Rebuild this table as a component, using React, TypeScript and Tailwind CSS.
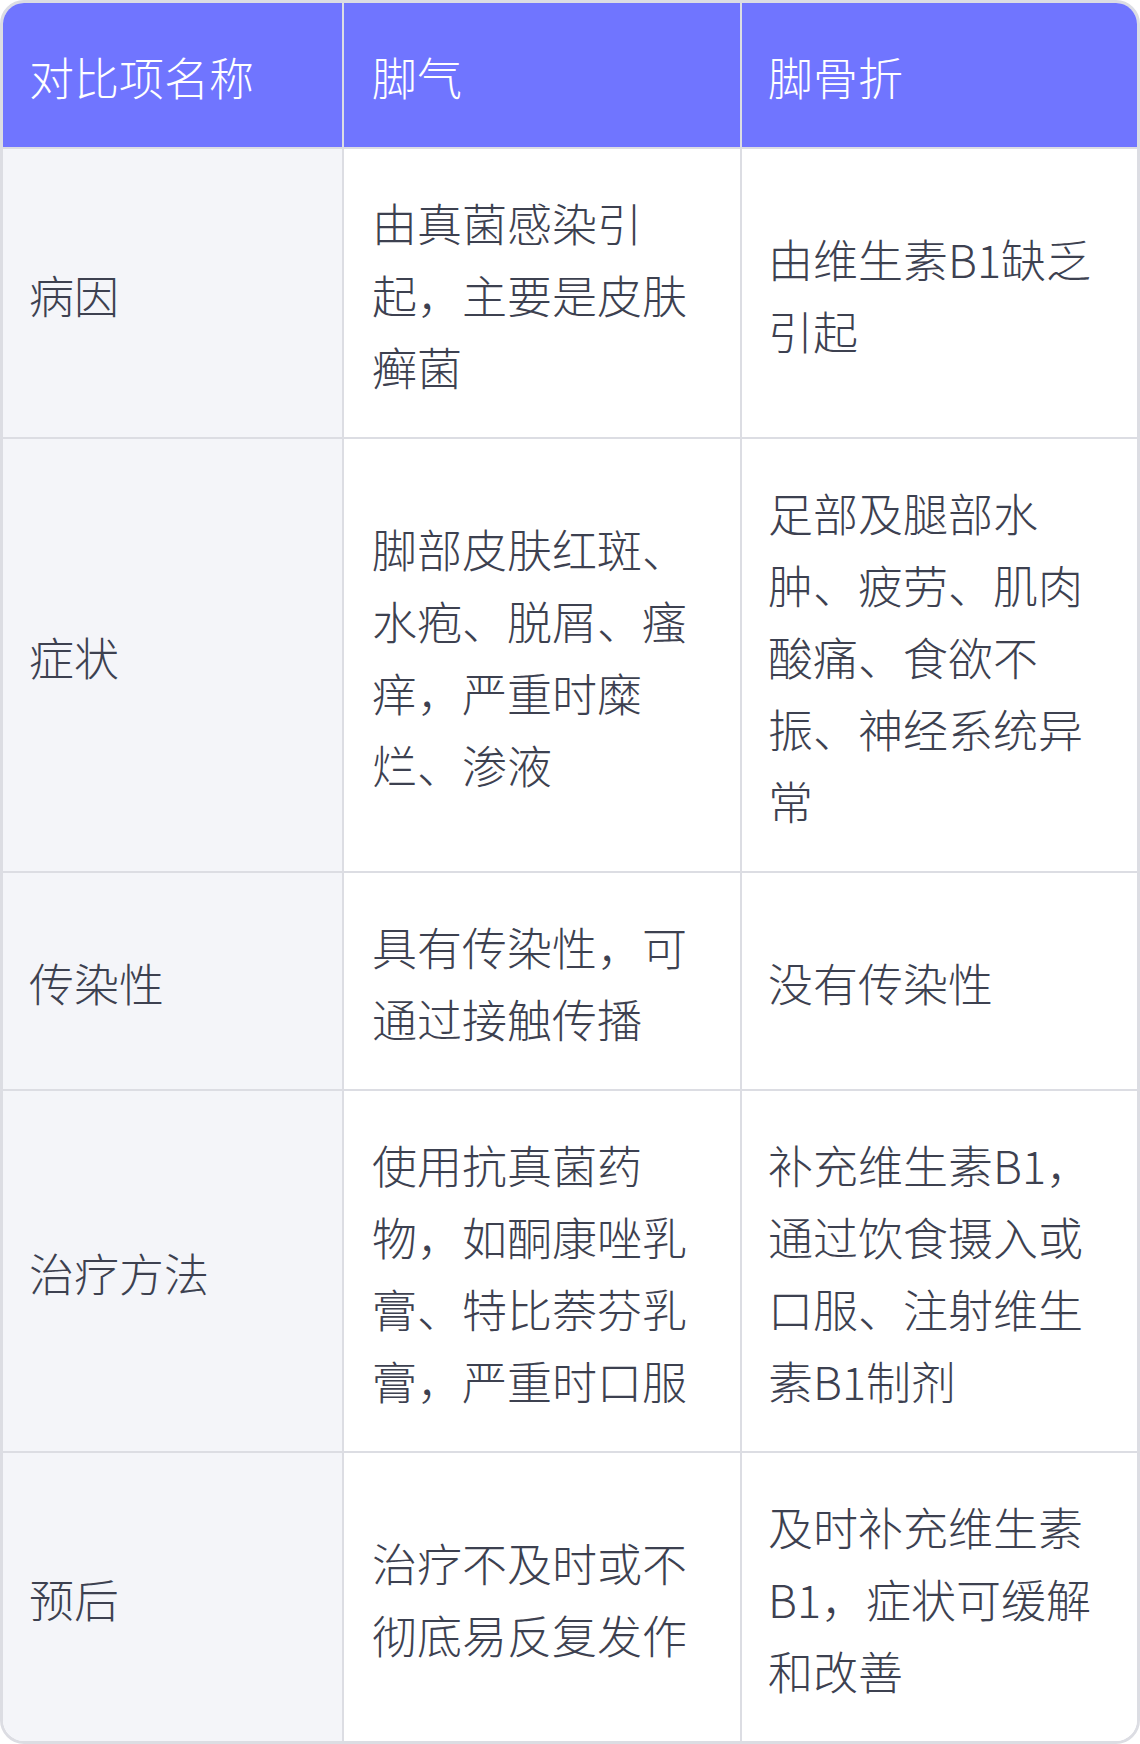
import React from "react";

const rows: [string, string, string][] = [
  ["病因", "由真菌感染引起，主要是皮肤癣菌", "由维生素B1缺乏引起"],
  ["症状", "脚部皮肤红斑、水疱、脱屑、瘙痒，严重时糜烂、渗液", "足部及腿部水肿、疲劳、肌肉酸痛、食欲不振、神经系统异常"],
  ["传染性", "具有传染性，可通过接触传播", "没有传染性"],
  ["治疗方法", "使用抗真菌药物，如酮康唑乳膏、特比萘芬乳膏，严重时口服", "补充维生素B1，通过饮食摄入或口服、注射维生素B1制剂"],
  ["预后", "治疗不及时或不彻底易反复发作", "及时补充维生素B1，症状可缓解和改善"],
];

export default function App() {
  return (
    <div
      className="w-[1140px] bg-white"
      style={{ fontFamily: '"Noto Sans CJK SC", "Noto Sans", sans-serif' }}
    >
      <div className="overflow-hidden rounded-[24px] border-[3px] border-[#dcdde3]">
        <div className="grid grid-cols-[341px_398px_1fr] text-[45px] leading-[72px] font-light">
          <div className="flex items-center border-r-2 border-b-2 border-[#dcdde3] bg-[#7075ff] pl-[26px] pr-[28px] pt-[38px] pb-[34px] text-white">
            对比项名称
          </div>
          <div className="flex items-center border-r-2 border-b-2 border-[#dcdde3] bg-[#7075ff] px-[28px] pt-[38px] pb-[34px] text-white">
            脚气
          </div>
          <div className="flex items-center border-b-2 border-[#dcdde3] bg-[#7075ff] pl-[26px] pr-[28px] pt-[38px] pb-[34px] text-white">
            脚骨折
          </div>
          {rows.map((r, i) => {
            const last = i === rows.length - 1;
            return (
              <React.Fragment key={i}>
                <div
                  className={
                    "flex items-center border-r-2 border-[#dcdde3] bg-[#f4f5f9] pl-[26px] pr-[28px] pt-[38px] pb-[34px] text-[#3d4150] " +
                    (last ? "" : "border-b-2")
                  }
                >
                  {r[0]}
                </div>
                <div
                  className={
                    "flex items-center border-r-2 border-[#dcdde3] bg-white px-[28px] pt-[38px] pb-[34px] text-[#3d4150] " +
                    (last ? "" : "border-b-2")
                  }
                >
                  <span>{r[1]}</span>
                </div>
                <div
                  className={
                    "flex items-center border-[#dcdde3] bg-white pl-[26px] pr-[28px] pt-[38px] pb-[34px] text-[#3d4150] " +
                    (last ? "" : "border-b-2")
                  }
                >
                  <span>{r[2]}</span>
                </div>
              </React.Fragment>
            );
          })}
        </div>
      </div>
    </div>
  );
}
